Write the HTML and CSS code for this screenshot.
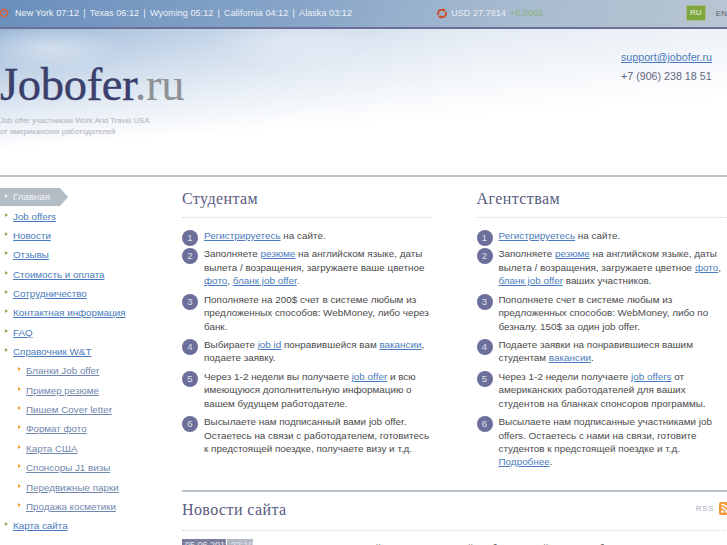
FILE: index.html
```html
<!DOCTYPE html>
<html lang="ru">
<head>
<meta charset="utf-8">
<title>Jobofer.ru</title>
<link rel="stylesheet" href="styles.css">
</head>
<body>
<div class="page">
  <header class="header">
    <div class="topbar">
      <div class="clocks">
        <svg class="ico" width="10" height="10" viewBox="0 0 10 10"><circle cx="4" cy="5" r="3.6" fill="none" stroke="#d9603a" stroke-width="1.5"/><path d="M4 3v2h2" fill="none" stroke="#d9603a"/></svg>
        <span>New York 07:12</span><i>|</i><span>Texas 06:12</span><i>|</i><span>Wyoming 05:12</span><i>|</i><span>California 04:12</span><i>|</i><span>Alaska 03:12</span>
      </div>
      <div class="rate">
        <svg class="ico" width="10" height="11" viewBox="0 0 10 11"><path d="M6.5 2H3L1.2 3.8v3.4" fill="none" stroke="#cc5030" stroke-width="2"/><path d="M3.5 9H7l1.8-1.8V3.800" fill="none" stroke="#cc5030" stroke-width="2"/><path d="M6 0l3 2.200-3 1.800zM4 11L1 8.800 4 7z" fill="#cc5030"/></svg>
        <span class="usd">USD 27.7814</span> <span class="up">+0.0062</span>
      </div>
      <div class="langs"><span class="lang-on">RU</span><span class="lang">EN</span></div>
    </div>
    <div class="brand">
      <div class="logo-block">
        <div class="logo">Jobofer<span>.ru</span></div>
        <p class="slogan">Job offer участникам Work And Travel USA<br>от американских работодателей</p>
      </div>
      <div class="contacts">
        <a href="#">support@jobofer.ru</a>
        <div class="phone">+7 (906) 238 18 51</div>
      </div>
    </div>
  </header>
  <div class="content">
    <nav class="menu">
      <a class="item active" href="#">Главная</a>
      <a class="item" href="#"><u>Job offers</u></a>
      <a class="item" href="#"><u>Новости</u></a>
      <a class="item" href="#"><u>Отзывы</u></a>
      <a class="item" href="#"><u>Стоимость и оплата</u></a>
      <a class="item" href="#"><u>Сотрудничество</u></a>
      <a class="item" href="#"><u>Контактная информация</u></a>
      <a class="item" href="#"><u>FAQ</u></a>
      <a class="item" href="#"><u>Справочник W&amp;T</u></a>
      <a class="item sub" href="#"><u>Бланки Job offer</u></a>
      <a class="item sub" href="#"><u>Пример резюме</u></a>
      <a class="item sub" href="#"><u>Пишем Cover letter</u></a>
      <a class="item sub" href="#"><u>Формат фото</u></a>
      <a class="item sub" href="#"><u>Карта США</u></a>
      <a class="item sub" href="#"><u>Спонсоры J1 визы</u></a>
      <a class="item sub" href="#"><u>Передвижные парки</u></a>
      <a class="item sub" href="#"><u>Продажа косметики</u></a>
      <a class="item" href="#"><u>Карта сайта</u></a>
    </nav>
    <main class="main">
      <div class="cols">
        <section class="col">
          <h2>Студентам</h2>
          <ol class="steps">
            <li><b>1</b><p><a href="#">Регистрируетесь</a> на сайте.</p></li>
            <li><b>2</b><p>Заполняете <a href="#">резюме</a> на английском языке, даты вылета / возращения, загружаете ваше цветное <a href="#">фото</a>, <a href="#">бланк job offer</a>.</p></li>
            <li><b>3</b><p>Пополняете на 200$ счет в системе любым из предложенных способов: WebMoney, либо через банк.</p></li>
            <li><b>4</b><p>Выбираете <a href="#">job id</a> понравившейся вам <a href="#">вакансии</a>, подаете заявку.</p></li>
            <li><b>5</b><p>Через 1-2 недели вы получаете <a href="#">job offer</a> и всю имеющуюся дополнительную информацию о вашем будущем работодателе.</p></li>
            <li><b>6</b><p>Высылаете нам подписанный вами job offer. Остаетесь на связи с работодателем, готовитесь к предстоящей поездке, получаете визу и т.д.</p></li>
          </ol>
        </section>
        <section class="col">
          <h2>Агентствам</h2>
          <ol class="steps">
            <li><b>1</b><p><a href="#">Регистрируетесь</a> на сайте.</p></li>
            <li><b>2</b><p>Заполняете <a href="#">резюме</a> на английском языке, даты вылета / возращения, загружаете цветное <a href="#">фото</a>, <a href="#">бланк job offer</a> ваших участников.</p></li>
            <li><b>3</b><p>Пополняете счет в системе любым из предложенных способов: WebMoney, либо по безналу. 150$ за один job offer.</p></li>
            <li><b>4</b><p>Подаете заявки на понравившиеся вашим студентам <a href="#">вакансии</a>.</p></li>
            <li><b>5</b><p>Через 1-2 недели получаете <a href="#">job offers</a> от американских работодателей для ваших студентов на бланках спонсоров программы.</p></li>
            <li><b>6</b><p>Высылаете нам подписанные участниками job offers. Остаетесь с нами на связи, готовите студентов к предстоящей поездке и т.д. <a href="#">Подробнее</a>.</p></li>
          </ol>
        </section>
      </div>
      <section class="news">
        <div class="news-head">
          <h2>Новости сайта</h2>
          <div class="rss"><span>RSS</span>
            <svg width="13" height="13" viewBox="0 0 13 13"><rect width="13" height="13" rx="2" fill="#f29a38"/><circle cx="3.4" cy="9.6" r="1.4" fill="#fff"/><path d="M2.2 5.6a5.2 5.2 0 0 1 5.2 5.2M2.2 2.6a8.2 8.2 0 0 1 8.2 8.2" fill="none" stroke="#fff" stroke-width="1.5"/></svg>
          </div>
        </div>
        <div class="news-row">
          <div class="stamp"><span class="date">05.06.2011</span><span class="time">22:10</span></div>
          <p>Запуск Раздел вакансий для участников сайта обновлен сейчас. Подробнее <a href="#">ID 000</a></p>
        </div>
      </section>
    </main>
  </div>
</div>
</body>
</html>
```
FILE: styles.css
```css
html, body {
  margin: 0;
  padding: 0;
  height: 545px;
  overflow: hidden;
  background: #fff;
}
body {
  font-family: "Liberation Sans", Arial, sans-serif;
  font-size: 9.9px;
  color: #4a4a4a;
}
a { color: #4a7cbd; }
p { margin: 0; }

.page { width: 727px; overflow: hidden; }

.header {
  height: 175px;
  border-bottom: 2px solid #bac4cc;
  background:
    radial-gradient(ellipse 70px 22px at 50px 48px, rgba(255,255,255,.4), transparent),
    radial-gradient(ellipse 80px 26px at 290px 42px, rgba(255,255,255,.3), transparent),
    linear-gradient(176deg, rgba(255,255,255,0) 14%, #fff 66%),
    linear-gradient(100deg, #9db8d8 0%, #c0d2e6 35%, #dbe4f0 65%, #e3eaf3 100%);
}
.topbar {
  height: 29px;
  box-sizing: border-box;
  border-bottom: 2px solid #6c7098;
  padding-bottom: 1px;
  background: linear-gradient(100deg, #6a8fbc 0%, #86a4c8 40%, #a7bbd0 70%, #b8c5d2 100%);
  display: flex;
  align-items: center;
  white-space: nowrap;
  color: #eef3f8;
  font-size: 9px;
  letter-spacing: .07px;
}
.ico { flex: none; display: block; }
.clocks { display: flex; align-items: center; width: 438px; }
.clocks span:first-of-type { margin-left: 5px; }
.clocks i { font-style: normal; margin: 0 4.2px; }
.rate { display: flex; align-items: center; gap: 4px; width: 249px; color: #e6ebf1; }
.up { color: #8cb07a; }
.langs { display: flex; align-items: center; }
.lang-on {
  width: 18px;
  height: 14px;
  line-height: 14px;
  text-align: center;
  background: #7fa53d;
  border: 1px solid #a9c08c;
  color: #f2f6ea;
  font-size: 8px;
}
.lang { margin-left: 10px; font-size: 8px; color: #5d6470; }

.brand { display: flex; justify-content: space-between; }
.logo-block { padding-top: 33px; }
.logo {
  font-family: "Liberation Serif", "Times New Roman", serif;
  font-size: 46.5px;
  line-height: 46px;
  color: #3a3f6c;
  letter-spacing: -.3px;
  -webkit-text-stroke: .4px #3a3f6c;
}
.logo span { color: #8e9296; -webkit-text-stroke: 0; }
.slogan {
  margin-top: 7px;
  font-size: 7.7px;
  line-height: 11px;
  color: #aeb2ba;
}
.contacts { width: 106px; padding-top: 22px; font-size: 10.7px; }
.phone { margin-top: 7px; color: #62657f; }

.content { display: flex; }

.menu { width: 182px; flex: none; padding-top: 11px; display: flex; flex-direction: column; }
.item {
  height: 19.35px;
  line-height: 19px;
  padding-left: 13px;
  position: relative;
  font-size: 9.8px;
  color: #4a7cbd;
  text-decoration: none;
}
.item::before {
  content: "";
  position: absolute;
  left: 5px;
  top: 6px;
  border-left: 3px solid #86ad4e;
  border-top: 2.5px solid transparent;
  border-bottom: 2.5px solid transparent;
}
.item.sub { padding-left: 26px; color: #7187ad; }
.item.sub::before { left: 18px; border-left-color: #f0a030; }
.item.active {
  width: 47px;
  height: 18px;
  line-height: 18px;
  color: #f3f5f7;
  background: #b4bcc4;
  margin-bottom: .7px;
}
.item.active::before { border-left-color: #f3f5f7; }
.item.active::after {
  content: "";
  position: absolute;
  left: 100%;
  top: 0;
  border-left: 8px solid #b4bcc4;
  border-top: 9px solid transparent;
  border-bottom: 9px solid transparent;
}

.main { width: 550px; flex: none; }
.cols { display: flex; gap: 44.5px; height: 313px; }
.col { width: 250px; flex: none; }
.col h2, .news h2 {
  margin: 0;
  font-family: "Liberation Serif", "Times New Roman", serif;
  font-weight: normal;
  font-size: 16px;
  letter-spacing: .4px;
  color: #585b82;
}
.col h2 {
  height: 41px;
  box-sizing: border-box;
  padding-top: 13px;
  line-height: 18px;
  border-bottom: 1px dotted #d4d6da;
}
.steps { list-style: none; margin: 0; padding: 11px 0 0; width: 250px; }
.steps li { display: flex; gap: 6px; margin-bottom: 5.05px; }
.steps b {
  flex: none;
  width: 16px;
  height: 16px;
  margin: 1px 0 -4px;
  border-radius: 50%;
  background: #6c6f99;
  color: #dfe0ea;
  font-weight: normal;
  font-size: 9.5px;
  line-height: 16px;
  text-align: center;
}
.steps p { line-height: 13.4px; }

.news { border-top: 2px solid #b8c1cc; }
.news-head {
  display: flex;
  justify-content: space-between;
  height: 39px;
  box-sizing: border-box;
  padding-top: 8px;
  border-bottom: 1px dotted #d4d6da;
}
.news h2 { line-height: 20px; }
.rss { display: flex; gap: 5px; align-items: flex-start; margin-top: 2px; font-size: 8px; letter-spacing: .6px; color: #a9afbe; }
.rss span { margin-top: 2px; }
.news-row { display: flex; gap: 17px; margin-top: 8px; white-space: nowrap; }
.news-row p { margin-top: 3px; }
.stamp { display: flex; font-size: 9px; color: #e8e8ef; }
.date { box-sizing: border-box; background: #7b7e9c; padding: 1px 3px; width: 44px; }
.time { box-sizing: border-box; background: #b3bac6; padding: 1px 4px; margin-left: 1px; width: 26px; }
```
